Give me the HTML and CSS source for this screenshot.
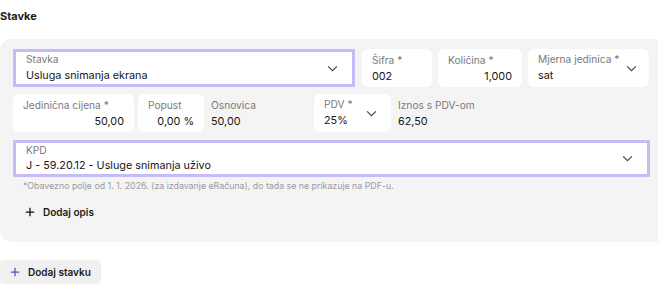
FILE: index.html
```html
<!DOCTYPE html>
<html lang="hr">
  <head>
    <meta charset="UTF-8" />
    <title>Stavke</title>
    <link rel="stylesheet" href="styles.css">
  </head>
  <body>
    <div class="page">
      <h3 class="title">Stavke</h3>
      <div class="card">
        <div class="row row-top">
          <div class="field field-select active w-stavka">
            <div class="field-text">
              <label>Stavka</label>
              <div class="value">Usluga snimanja ekrana</div>
            </div>
            <svg class="chev" viewBox="0 0 12 8"><path d="M1 1.5l5 5 5-5" /></svg>
          </div>
          <div class="field w-sifra">
            <label>Šifra *</label>
            <div class="value">002</div>
          </div>
          <div class="field w-kol">
            <label>Količina *</label>
            <div class="value right">1,000</div>
          </div>
          <div class="field field-select w-mj">
            <div class="field-text">
              <label>Mjerna jedinica *</label>
              <div class="value">sat</div>
            </div>
            <svg class="chev" viewBox="0 0 12 8"><path d="M1 1.5l5 5 5-5" /></svg>
          </div>
        </div>

        <div class="row row-mid">
          <div class="field w-cijena">
            <label>Jedinična cijena *</label>
            <div class="value right">50,00</div>
          </div>
          <div class="field w-popust">
            <label>Popust</label>
            <div class="value right">0,00 %</div>
          </div>
          <div class="static w-osnovica">
            <label>Osnovica</label>
            <div class="value">50,00</div>
          </div>
          <div class="field field-select w-pdv">
            <div class="field-text">
              <label>PDV *</label>
              <div class="value">25%</div>
            </div>
            <svg class="chev" viewBox="0 0 12 8"><path d="M1 1.5l5 5 5-5" /></svg>
          </div>
          <div class="static">
            <label>Iznos s PDV-om</label>
            <div class="value">62,50</div>
          </div>
        </div>

        <div class="field field-select active kpd">
          <div class="field-text">
            <label>KPD</label>
            <div class="value">J - 59.20.12 - Usluge snimanja uživo</div>
          </div>
          <svg class="chev" viewBox="0 0 12 8"><path d="M1 1.5l5 5 5-5" /></svg>
        </div>
        <div class="note">*Obavezno polje od 1. 1. 2026. (za izdavanje eRačuna), do tada se ne prikazuje na PDF-u.</div>

        <button class="link-btn">
          <svg class="plus" viewBox="0 0 12 12"><path d="M6 1v10M1 6h10" /></svg>
          Dodaj opis
        </button>
      </div>

      <button class="add-btn">
        <svg class="plus purple" viewBox="0 0 12 12"><path d="M6 1v10M1 6h10" /></svg>
        Dodaj stavku
      </button>
    </div>
  </body>
</html>
```

FILE: styles.css
```css
body {
  margin: 0;
  font-family: Inter, "Noto Sans", sans-serif;
  color: #1b1b1b;
  background: #fff;
  overflow: hidden;
}
.page {
  width: 672px;
}
.title {
  font-size: 11px;
  font-weight: 700;
  margin: 0;
  padding-top: 9px;
  height: 29px;
  box-sizing: border-box;
}
.card {
  background-color: #f4f4f4;
  border-radius: 12px;
  padding: 10px 14px 24px 13px;
  margin-top: 10px;
}
.row {
  display: flex;
  align-items: flex-start;
}
.row-top {
  gap: 6px;
}
.row-mid {
  gap: 4px;
  margin-top: 7px;
}
.field {
  background-color: #fff;
  border-radius: 6px;
  height: 38px;
  box-sizing: border-box;
  padding: 5px 10px 0 10px;
  display: flex;
  flex-direction: column;
}
.field-select {
  flex-direction: row;
  align-items: center;
  padding-top: 0;
}
.field-text {
  flex: 1;
  display: flex;
  flex-direction: column;
}
.field.active {
  border: 3px solid #c6bbf8;
  border-radius: 1px;
  padding-left: 10px;
  padding-right: 14px;
}
label {
  font-size: 10.2px;
  color: #7a7a7a;
  line-height: 13px;
}
.value {
  font-size: 10.8px;
  line-height: 15px;
  margin-top: 2px;
  color: #161616;
}
.right {
  text-align: right;
}
.chev {
  width: 11px;
  height: 7px;
  fill: none;
  stroke: #444;
  stroke-width: 1.3;
}
.static {
  padding-top: 5px;
  display: flex;
  flex-direction: column;
}
.w-stavka { width: 342px; margin-right: 1px; }
.w-sifra { width: 70px; }
.w-kol { width: 84px; }
.w-mj { width: 121px; padding-right: 12px; }
.w-mj label { white-space: nowrap; }
.w-cijena { width: 121px; }
.w-popust { width: 66px; }
.w-osnovica { width: 99px; margin-left: 3px; }
.w-pdv { width: 77px; padding-right: 14px; margin-right: 3px; }
.kpd {
  margin-top: 8px;
  width: 637px;
  height: 37px;
}
.kpd label {
  line-height: 12px;
}
.note {
  font-size: 8.8px;
  color: #9a9a9a;
  margin: 3px 0 0 10px;
  line-height: 12px;
}
.link-btn,
.add-btn {
  display: flex;
  align-items: center;
  gap: 8px;
  border: none;
  font-family: inherit;
  font-size: 10px;
  font-weight: 600;
  color: #1b1b1b;
  cursor: pointer;
  white-space: nowrap;
}
.link-btn {
  background: none;
  padding: 0;
  margin: 14px 0 0 12px;
}
.add-btn {
  margin-top: 18px;
  background-color: #f0f0f0;
  border-radius: 4px;
  padding: 0 10px;
  height: 24px;
}
.plus {
  width: 10px;
  height: 10px;
  fill: none;
  stroke: #111;
  stroke-width: 1.5;
}
.plus.purple {
  stroke: #7b3fb4;
}
```
